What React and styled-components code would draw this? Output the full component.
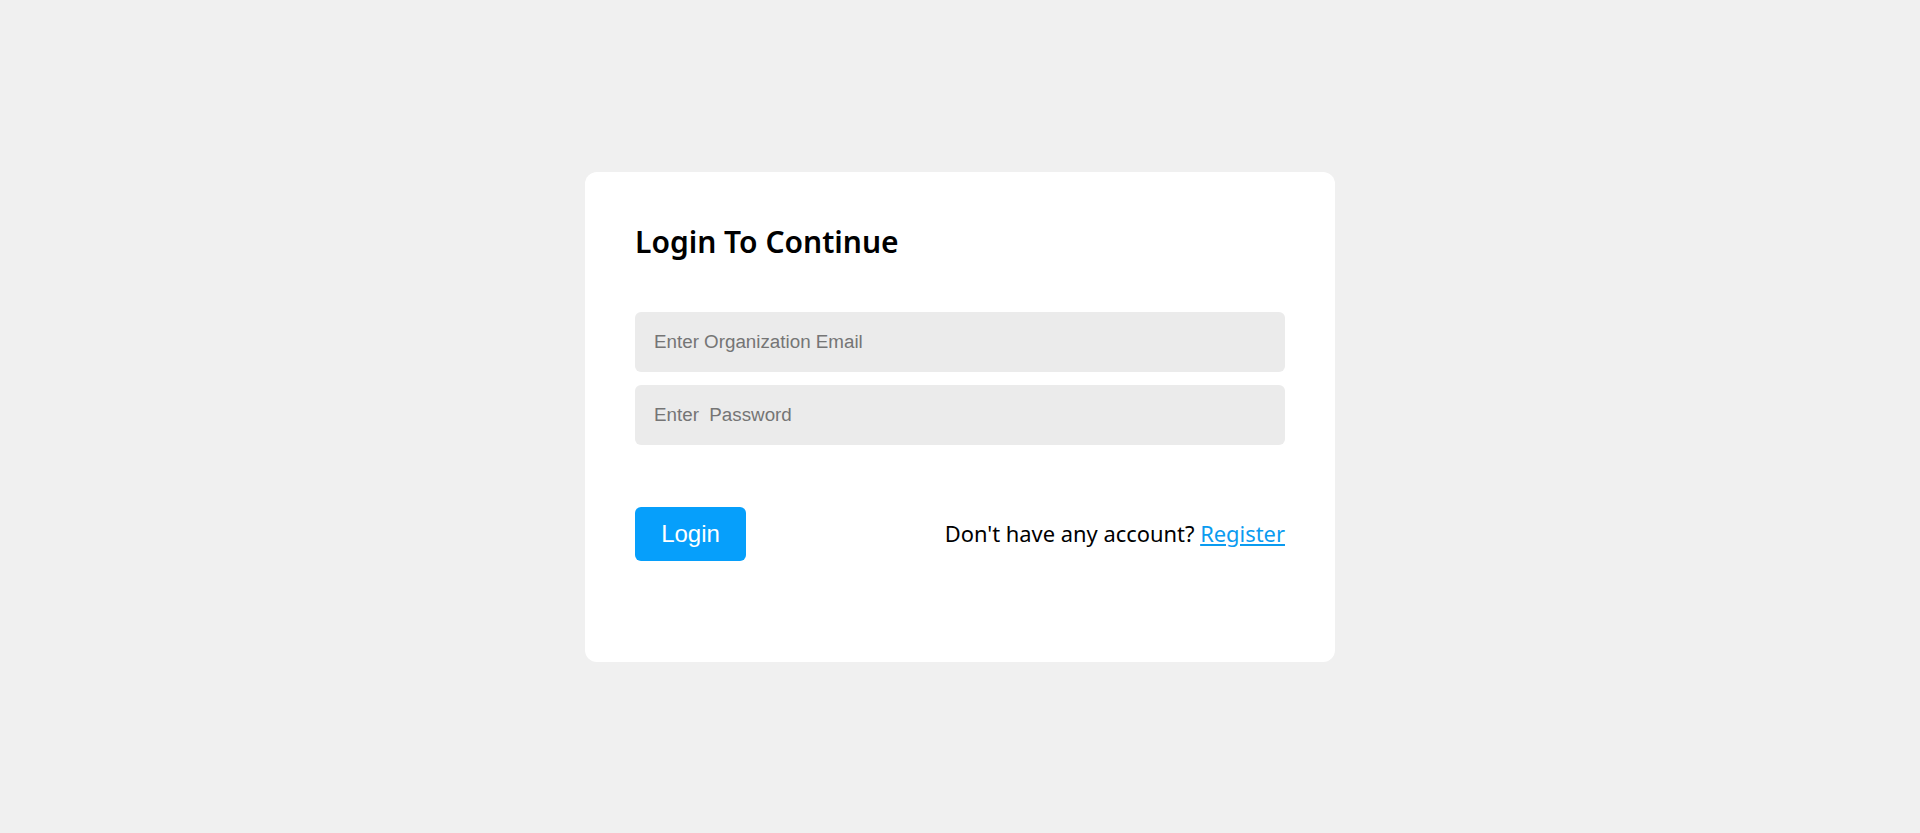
import React from "react";
import styled, { createGlobalStyle } from "styled-components";

const GlobalStyle = createGlobalStyle`
  * {
    box-sizing: border-box;
  }
  body {
    margin: 0;
    background: #f0f0f0;
    font-family: "Noto Sans", "Open Sans", sans-serif;
  }
`;

const Page = styled.div`
  min-height: 100vh;
  display: flex;
  align-items: center;
  justify-content: center;
`;

const Card = styled.form`
  width: 750px;
  height: 490px;
  background: #fff;
  border-radius: 12px;
  padding: 50px;
  h3 {
    margin: 0;
    font-size: 30px;
    font-weight: 600;
    line-height: 40px;
    color: #000;
  }
`;

const Fields = styled.div`
  display: flex;
  flex-direction: column;
  gap: 13px;
  margin-top: 50px;
`;

const Input = styled.input`
  width: 100%;
  height: 60px;
  border: none;
  outline: none;
  border-radius: 6px;
  background: #ebebeb;
  padding: 0 19px;
  font-family: "Liberation Sans", Arial, sans-serif;
  font-size: 18.8px;
  color: #333;
  &::placeholder {
    color: #757575;
  }
`;

const Footer = styled.div`
  display: flex;
  justify-content: space-between;
  align-items: center;
  margin-top: 62px;
`;

const Button = styled.button`
  width: 111px;
  height: 54px;
  border: none;
  border-radius: 6px;
  background: #069ffb;
  color: #fff;
  font-family: "Liberation Sans", Arial, sans-serif;
  font-size: 24px;
  cursor: pointer;
`;

const Note = styled.p`
  margin: 0;
  font-size: 21.9px;
  color: #000;
  a {
    color: #0a9bf0;
    text-decoration: underline;
  }
`;

const App = () => {
  return (
    <Page>
      <GlobalStyle />
      <Card onSubmit={(e) => e.preventDefault()}>
        <h3>Login To Continue</h3>
        <Fields>
          <Input type="email" placeholder="Enter Organization Email" />
          <Input type="password" placeholder="Enter  Password" />
        </Fields>
        <Footer>
          <Button type="submit">Login</Button>
          <Note>
            Don't have any account? <a href="#">Register</a>
          </Note>
        </Footer>
      </Card>
    </Page>
  );
};

export default App;
